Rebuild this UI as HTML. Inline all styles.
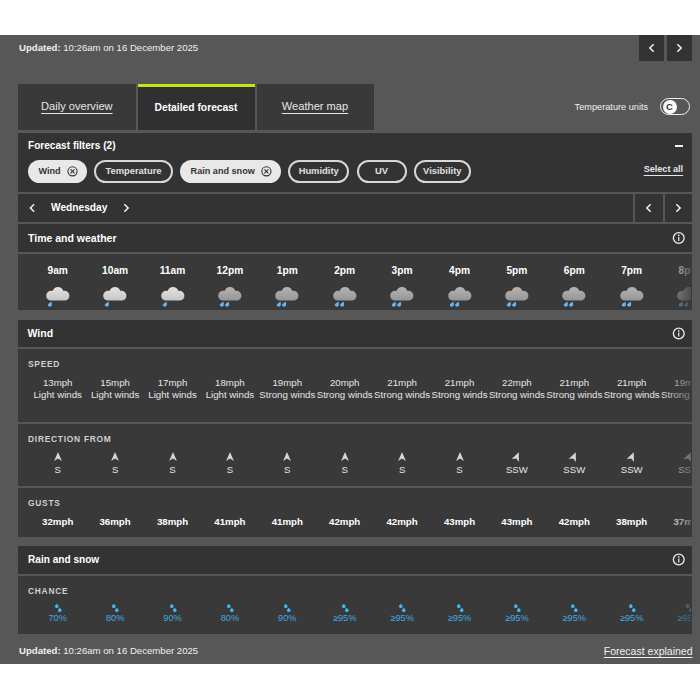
<!DOCTYPE html>
<html><head><meta charset="utf-8"><style>
html,body{margin:0;padding:0;background:#fff;width:700px;height:700px;overflow:hidden;position:relative}
body>div,body>svg,body div,body svg{position:absolute}
.t{white-space:nowrap;line-height:1;font-family:"Liberation Sans", sans-serif}
.u{text-decoration:underline;text-underline-offset:2.5px;text-decoration-thickness:1px}
.u2{text-decoration:underline;text-underline-offset:2.5px;text-decoration-thickness:1px}
.u3{text-decoration:underline;text-underline-offset:2px;text-decoration-thickness:1px}
</style></head><body>
<div style="left:0px;top:35px;width:700px;height:629px;background:#575757;"></div>
<div class="t " style="left:19px;top:43.47px;font-size:9.6px;font-weight:400;color:#f0f0f0;"><b>Updated:</b> 10:26am on 16 December 2025</div>
<div style="left:639px;top:35px;width:25px;height:26px;background:#333;"></div>
<div style="left:667px;top:35px;width:25px;height:26px;background:#333;"></div>
<svg style="left:0;top:0" width="700" height="700"><path d="M653.1 44.8 L649.9 48 L653.1 51.2" stroke="#eee" stroke-width="1.6" fill="none" stroke-linecap="square"/></svg>
<svg style="left:0;top:0" width="700" height="700"><path d="M677.9 44.8 L681.1 48 L677.9 51.2" stroke="#eee" stroke-width="1.6" fill="none" stroke-linecap="square"/></svg>
<div style="left:18px;top:84px;width:117.5px;height:46px;background:#393939;"></div>
<div style="left:137.5px;top:84px;width:117.0px;height:46px;background:#303030;"></div>
<div style="left:137.5px;top:84px;width:117.0px;height:3.299999999999997px;background:#c2e614;"></div>
<div style="left:256.5px;top:84px;width:117.0px;height:46px;background:#393939;"></div>
<div class="t u" style="left:-23.200000000000003px;width:200px;text-align:center;top:101.00px;font-size:11.1px;font-weight:400;color:#e6e6e6;">Daily overview</div>
<div class="t " style="left:96px;width:200px;text-align:center;top:103.48px;font-size:10.3px;font-weight:700;color:#fff;">Detailed forecast</div>
<div class="t u" style="left:215px;width:200px;text-align:center;top:101.00px;font-size:11.1px;font-weight:400;color:#e6e6e6;">Weather map</div>
<div class="t " style="left:574.6px;top:102.51px;font-size:9.2px;font-weight:400;color:#f0f0f0;">Temperature units</div>
<div style="left:660px;top:98px;width:27.6px;height:14.8px;border:1.8px solid #eeeeee;border-radius:10px;"></div>
<div style="left:663px;top:100.1px;width:13.8px;height:13.8px;border-radius:50%;background:#fafafa"></div>
<div class="t " style="left:569.4px;width:200px;text-align:center;top:102.14px;font-size:9.4px;font-weight:700;color:#3a3a3a;">C</div>
<div style="left:18px;top:132.5px;width:674px;height:59.5px;background:#333333;"></div>
<div class="t " style="left:28px;top:141.25px;font-size:10.1px;font-weight:700;color:#fff;">Forecast filters (2)</div>
<div style="left:674.6px;top:145px;width:8.399999999999977px;height:2px;background:#eee;"></div>
<div class="t u2" style="left:383.1px;width:300px;text-align:right;top:164.90px;font-size:9.1px;font-weight:700;color:#e6e6e6;">Select all</div>
<div style="left:27.5px;top:160px;width:59.900000000000006px;height:23px;border-radius:12px;background:#e8e8e8"></div>
<div class="t " style="left:38.5px;top:166.80px;font-size:9.1px;font-weight:700;color:#333;">Wind</div>
<svg style="left:0;top:0" width="700" height="700"><circle cx="72.5" cy="171.3" r="4.6" stroke="#333" stroke-width="1.1" fill="none"/><path d="M70.5 169.3 L74.5 173.3 M74.5 169.3 L70.5 173.3" stroke="#333" stroke-width="1.1"/></svg>
<div style="left:94.3px;top:160px;width:74.39999999999999px;height:19px;border-radius:12px;border:2px solid #d8d8d8"></div>
<div class="t " style="left:33.5px;width:200px;text-align:center;top:166.24px;font-size:9.4px;font-weight:700;color:#e0e0e0;">Temperature</div>
<div style="left:179.6px;top:160px;width:101.70000000000002px;height:23px;border-radius:12px;background:#e8e8e8"></div>
<div class="t " style="left:190.6px;top:166.80px;font-size:9.1px;font-weight:700;color:#333;">Rain and snow</div>
<svg style="left:0;top:0" width="700" height="700"><circle cx="266.40000000000003" cy="171.3" r="4.6" stroke="#333" stroke-width="1.1" fill="none"/><path d="M264.40000000000003 169.3 L268.40000000000003 173.3 M268.40000000000003 169.3 L264.40000000000003 173.3" stroke="#333" stroke-width="1.1"/></svg>
<div style="left:288px;top:160px;width:57.39999999999998px;height:19px;border-radius:12px;border:2px solid #d8d8d8"></div>
<div class="t " style="left:218.7px;width:200px;text-align:center;top:166.24px;font-size:9.4px;font-weight:700;color:#e0e0e0;">Humidity</div>
<div style="left:356.6px;top:160px;width:46.0px;height:19px;border-radius:12px;border:2px solid #d8d8d8"></div>
<div class="t " style="left:281.6px;width:200px;text-align:center;top:166.24px;font-size:9.4px;font-weight:700;color:#e0e0e0;">UV</div>
<div style="left:413.7px;top:160px;width:53.19999999999999px;height:19px;border-radius:12px;border:2px solid #d8d8d8"></div>
<div class="t " style="left:342.29999999999995px;width:200px;text-align:center;top:166.24px;font-size:9.4px;font-weight:700;color:#e0e0e0;">Visibility</div>
<div style="left:18px;top:194.2px;width:615px;height:27.600000000000023px;background:#333333;"></div>
<div style="left:635px;top:194.2px;width:28px;height:27.600000000000023px;background:#333333;"></div>
<div style="left:665px;top:194.2px;width:27px;height:27.600000000000023px;background:#333333;"></div>
<svg style="left:0;top:0" width="700" height="700"><path d="M33.6 204.8 L30.4 208 L33.6 211.2" stroke="#eee" stroke-width="1.6" fill="none" stroke-linecap="square"/></svg>
<svg style="left:0;top:0" width="700" height="700"><path d="M124.9 204.8 L128.1 208 L124.9 211.2" stroke="#eee" stroke-width="1.6" fill="none" stroke-linecap="square"/></svg>
<div class="t " style="left:51px;top:203.37px;font-size:10.2px;font-weight:700;color:#fff;">Wednesday</div>
<svg style="left:0;top:0" width="700" height="700"><path d="M650.1 204.8 L646.9 208 L650.1 211.2" stroke="#eee" stroke-width="1.6" fill="none" stroke-linecap="square"/></svg>
<svg style="left:0;top:0" width="700" height="700"><path d="M676.9 204.8 L680.1 208 L676.9 211.2" stroke="#eee" stroke-width="1.6" fill="none" stroke-linecap="square"/></svg>
<div style="left:18px;top:224px;width:674px;height:27.599999999999994px;background:#333333;"></div>
<div class="t " style="left:28px;top:232.51px;font-size:10.5px;font-weight:700;color:#fff;">Time and weather</div>
<svg style="left:0;top:0" width="700" height="700"><circle cx="678.75" cy="238" r="5.4" stroke="#eee" stroke-width="1.3" fill="none"/><circle cx="678.75" cy="235.4" r="0.8" fill="#eee"/><path d="M678.75 237 L678.75 241" stroke="#eee" stroke-width="1.2"/></svg>
<div style="left:18px;top:254px;width:674px;height:56px;background:#393939;"></div>
<div style="left:18px;top:0;width:673px;height:700px;overflow:hidden">
<div class="t " style="left:-60.3px;width:200px;text-align:center;top:265.57px;font-size:10.2px;font-weight:700;color:#fff;">9am</div>
<svg style="left:27.70px;top:284px" width="24" height="24" viewBox="0 0 24 24"><defs><linearGradient id="g57" x1="0" y1="0" x2="0" y2="1"><stop offset="0" stop-color="#e2e2e2"/><stop offset="1" stop-color="#c6c6c6"/></linearGradient></defs><path d="M5.1 16.6 A4.9 4.9 0 0 1 5.1 6.8 L6.77 6.8 A5.45 5.45 0 0 1 17.23 6.8 L18.5 6.8 A4.9 4.9 0 0 1 18.5 16.6 Z" fill="url(#g57)"/><g transform="translate(1.6,17.7)"><path d="M4.0 0 Q0.7 1.3 0.1 3.0 A2.1 2.1 0 0 0 4.2 3.5 Q4.35 1.7 4.0 0 Z" fill="#6ab4f0"/></g></svg>
<div class="t " style="left:-2.9000000000000057px;width:200px;text-align:center;top:265.57px;font-size:10.2px;font-weight:700;color:#fff;">10am</div>
<svg style="left:85.10px;top:284px" width="24" height="24" viewBox="0 0 24 24"><defs><linearGradient id="g115" x1="0" y1="0" x2="0" y2="1"><stop offset="0" stop-color="#e2e2e2"/><stop offset="1" stop-color="#c6c6c6"/></linearGradient></defs><path d="M5.1 16.6 A4.9 4.9 0 0 1 5.1 6.8 L6.77 6.8 A5.45 5.45 0 0 1 17.23 6.8 L18.5 6.8 A4.9 4.9 0 0 1 18.5 16.6 Z" fill="url(#g115)"/><g transform="translate(1.6,17.7)"><path d="M4.0 0 Q0.7 1.3 0.1 3.0 A2.1 2.1 0 0 0 4.2 3.5 Q4.35 1.7 4.0 0 Z" fill="#6ab4f0"/></g></svg>
<div class="t " style="left:54.5px;width:200px;text-align:center;top:265.57px;font-size:10.2px;font-weight:700;color:#fff;">11am</div>
<svg style="left:142.50px;top:284px" width="24" height="24" viewBox="0 0 24 24"><defs><linearGradient id="g172" x1="0" y1="0" x2="0" y2="1"><stop offset="0" stop-color="#e2e2e2"/><stop offset="1" stop-color="#c6c6c6"/></linearGradient></defs><path d="M5.1 16.6 A4.9 4.9 0 0 1 5.1 6.8 L6.77 6.8 A5.45 5.45 0 0 1 17.23 6.8 L18.5 6.8 A4.9 4.9 0 0 1 18.5 16.6 Z" fill="url(#g172)"/><g transform="translate(1.6,17.7)"><path d="M4.0 0 Q0.7 1.3 0.1 3.0 A2.1 2.1 0 0 0 4.2 3.5 Q4.35 1.7 4.0 0 Z" fill="#6ab4f0"/></g></svg>
<div class="t " style="left:111.89999999999998px;width:200px;text-align:center;top:265.57px;font-size:10.2px;font-weight:700;color:#fff;">12pm</div>
<svg style="left:199.90px;top:284px" width="24" height="24" viewBox="0 0 24 24"><defs><linearGradient id="g229" x1="0" y1="0" x2="0" y2="1"><stop offset="0" stop-color="#b4b4b4"/><stop offset="1" stop-color="#969696"/></linearGradient></defs><path d="M5.1 16.6 A4.9 4.9 0 0 1 5.1 6.8 L6.77 6.8 A5.45 5.45 0 0 1 17.23 6.8 L18.5 6.8 A4.9 4.9 0 0 1 18.5 16.6 Z" fill="url(#g229)"/><g transform="translate(1.6,17.7)"><path d="M4.0 0 Q0.7 1.3 0.1 3.0 A2.1 2.1 0 0 0 4.2 3.5 Q4.35 1.7 4.0 0 Z" fill="#6ab4f0"/></g><g transform="translate(6.9,17.7)"><path d="M4.0 0 Q0.7 1.3 0.1 3.0 A2.1 2.1 0 0 0 4.2 3.5 Q4.35 1.7 4.0 0 Z" fill="#6ab4f0"/></g></svg>
<div class="t " style="left:169.3px;width:200px;text-align:center;top:265.57px;font-size:10.2px;font-weight:700;color:#fff;">1pm</div>
<svg style="left:257.30px;top:284px" width="24" height="24" viewBox="0 0 24 24"><defs><linearGradient id="g287" x1="0" y1="0" x2="0" y2="1"><stop offset="0" stop-color="#b4b4b4"/><stop offset="1" stop-color="#969696"/></linearGradient></defs><path d="M5.1 16.6 A4.9 4.9 0 0 1 5.1 6.8 L6.77 6.8 A5.45 5.45 0 0 1 17.23 6.8 L18.5 6.8 A4.9 4.9 0 0 1 18.5 16.6 Z" fill="url(#g287)"/><g transform="translate(1.6,17.7)"><path d="M4.0 0 Q0.7 1.3 0.1 3.0 A2.1 2.1 0 0 0 4.2 3.5 Q4.35 1.7 4.0 0 Z" fill="#6ab4f0"/></g><g transform="translate(6.9,17.7)"><path d="M4.0 0 Q0.7 1.3 0.1 3.0 A2.1 2.1 0 0 0 4.2 3.5 Q4.35 1.7 4.0 0 Z" fill="#6ab4f0"/></g></svg>
<div class="t " style="left:226.7px;width:200px;text-align:center;top:265.57px;font-size:10.2px;font-weight:700;color:#fff;">2pm</div>
<svg style="left:314.70px;top:284px" width="24" height="24" viewBox="0 0 24 24"><defs><linearGradient id="g344" x1="0" y1="0" x2="0" y2="1"><stop offset="0" stop-color="#b4b4b4"/><stop offset="1" stop-color="#969696"/></linearGradient></defs><path d="M5.1 16.6 A4.9 4.9 0 0 1 5.1 6.8 L6.77 6.8 A5.45 5.45 0 0 1 17.23 6.8 L18.5 6.8 A4.9 4.9 0 0 1 18.5 16.6 Z" fill="url(#g344)"/><g transform="translate(1.6,17.7)"><path d="M4.0 0 Q0.7 1.3 0.1 3.0 A2.1 2.1 0 0 0 4.2 3.5 Q4.35 1.7 4.0 0 Z" fill="#6ab4f0"/></g><g transform="translate(6.9,17.7)"><path d="M4.0 0 Q0.7 1.3 0.1 3.0 A2.1 2.1 0 0 0 4.2 3.5 Q4.35 1.7 4.0 0 Z" fill="#6ab4f0"/></g></svg>
<div class="t " style="left:284.09999999999997px;width:200px;text-align:center;top:265.57px;font-size:10.2px;font-weight:700;color:#fff;">3pm</div>
<svg style="left:372.10px;top:284px" width="24" height="24" viewBox="0 0 24 24"><defs><linearGradient id="g402" x1="0" y1="0" x2="0" y2="1"><stop offset="0" stop-color="#b4b4b4"/><stop offset="1" stop-color="#969696"/></linearGradient></defs><path d="M5.1 16.6 A4.9 4.9 0 0 1 5.1 6.8 L6.77 6.8 A5.45 5.45 0 0 1 17.23 6.8 L18.5 6.8 A4.9 4.9 0 0 1 18.5 16.6 Z" fill="url(#g402)"/><g transform="translate(1.6,17.7)"><path d="M4.0 0 Q0.7 1.3 0.1 3.0 A2.1 2.1 0 0 0 4.2 3.5 Q4.35 1.7 4.0 0 Z" fill="#6ab4f0"/></g><g transform="translate(6.9,17.7)"><path d="M4.0 0 Q0.7 1.3 0.1 3.0 A2.1 2.1 0 0 0 4.2 3.5 Q4.35 1.7 4.0 0 Z" fill="#6ab4f0"/></g></svg>
<div class="t " style="left:341.5px;width:200px;text-align:center;top:265.57px;font-size:10.2px;font-weight:700;color:#fff;">4pm</div>
<svg style="left:429.50px;top:284px" width="24" height="24" viewBox="0 0 24 24"><defs><linearGradient id="g459" x1="0" y1="0" x2="0" y2="1"><stop offset="0" stop-color="#b4b4b4"/><stop offset="1" stop-color="#969696"/></linearGradient></defs><path d="M5.1 16.6 A4.9 4.9 0 0 1 5.1 6.8 L6.77 6.8 A5.45 5.45 0 0 1 17.23 6.8 L18.5 6.8 A4.9 4.9 0 0 1 18.5 16.6 Z" fill="url(#g459)"/><g transform="translate(1.6,17.7)"><path d="M4.0 0 Q0.7 1.3 0.1 3.0 A2.1 2.1 0 0 0 4.2 3.5 Q4.35 1.7 4.0 0 Z" fill="#6ab4f0"/></g><g transform="translate(6.9,17.7)"><path d="M4.0 0 Q0.7 1.3 0.1 3.0 A2.1 2.1 0 0 0 4.2 3.5 Q4.35 1.7 4.0 0 Z" fill="#6ab4f0"/></g></svg>
<div class="t " style="left:398.9px;width:200px;text-align:center;top:265.57px;font-size:10.2px;font-weight:700;color:#fff;">5pm</div>
<svg style="left:486.90px;top:284px" width="24" height="24" viewBox="0 0 24 24"><defs><linearGradient id="g516" x1="0" y1="0" x2="0" y2="1"><stop offset="0" stop-color="#b4b4b4"/><stop offset="1" stop-color="#969696"/></linearGradient></defs><path d="M5.1 16.6 A4.9 4.9 0 0 1 5.1 6.8 L6.77 6.8 A5.45 5.45 0 0 1 17.23 6.8 L18.5 6.8 A4.9 4.9 0 0 1 18.5 16.6 Z" fill="url(#g516)"/><g transform="translate(1.6,17.7)"><path d="M4.0 0 Q0.7 1.3 0.1 3.0 A2.1 2.1 0 0 0 4.2 3.5 Q4.35 1.7 4.0 0 Z" fill="#6ab4f0"/></g><g transform="translate(6.9,17.7)"><path d="M4.0 0 Q0.7 1.3 0.1 3.0 A2.1 2.1 0 0 0 4.2 3.5 Q4.35 1.7 4.0 0 Z" fill="#6ab4f0"/></g></svg>
<div class="t " style="left:456.30000000000007px;width:200px;text-align:center;top:265.57px;font-size:10.2px;font-weight:700;color:#fff;">6pm</div>
<svg style="left:544.30px;top:284px" width="24" height="24" viewBox="0 0 24 24"><defs><linearGradient id="g574" x1="0" y1="0" x2="0" y2="1"><stop offset="0" stop-color="#b4b4b4"/><stop offset="1" stop-color="#969696"/></linearGradient></defs><path d="M5.1 16.6 A4.9 4.9 0 0 1 5.1 6.8 L6.77 6.8 A5.45 5.45 0 0 1 17.23 6.8 L18.5 6.8 A4.9 4.9 0 0 1 18.5 16.6 Z" fill="url(#g574)"/><g transform="translate(1.6,17.7)"><path d="M4.0 0 Q0.7 1.3 0.1 3.0 A2.1 2.1 0 0 0 4.2 3.5 Q4.35 1.7 4.0 0 Z" fill="#6ab4f0"/></g><g transform="translate(6.9,17.7)"><path d="M4.0 0 Q0.7 1.3 0.1 3.0 A2.1 2.1 0 0 0 4.2 3.5 Q4.35 1.7 4.0 0 Z" fill="#6ab4f0"/></g></svg>
<div class="t " style="left:513.7px;width:200px;text-align:center;top:265.57px;font-size:10.2px;font-weight:700;color:#fff;">7pm</div>
<svg style="left:601.70px;top:284px" width="24" height="24" viewBox="0 0 24 24"><defs><linearGradient id="g631" x1="0" y1="0" x2="0" y2="1"><stop offset="0" stop-color="#b4b4b4"/><stop offset="1" stop-color="#969696"/></linearGradient></defs><path d="M5.1 16.6 A4.9 4.9 0 0 1 5.1 6.8 L6.77 6.8 A5.45 5.45 0 0 1 17.23 6.8 L18.5 6.8 A4.9 4.9 0 0 1 18.5 16.6 Z" fill="url(#g631)"/><g transform="translate(1.6,17.7)"><path d="M4.0 0 Q0.7 1.3 0.1 3.0 A2.1 2.1 0 0 0 4.2 3.5 Q4.35 1.7 4.0 0 Z" fill="#6ab4f0"/></g><g transform="translate(6.9,17.7)"><path d="M4.0 0 Q0.7 1.3 0.1 3.0 A2.1 2.1 0 0 0 4.2 3.5 Q4.35 1.7 4.0 0 Z" fill="#6ab4f0"/></g></svg>
<div class="t " style="left:571.1px;width:200px;text-align:center;top:265.57px;font-size:10.2px;font-weight:700;color:#fff;">8pm</div>
<svg style="left:659.10px;top:284px" width="24" height="24" viewBox="0 0 24 24"><defs><linearGradient id="g689" x1="0" y1="0" x2="0" y2="1"><stop offset="0" stop-color="#b4b4b4"/><stop offset="1" stop-color="#969696"/></linearGradient></defs><path d="M5.1 16.6 A4.9 4.9 0 0 1 5.1 6.8 L6.77 6.8 A5.45 5.45 0 0 1 17.23 6.8 L18.5 6.8 A4.9 4.9 0 0 1 18.5 16.6 Z" fill="url(#g689)"/><g transform="translate(1.6,17.7)"><path d="M4.0 0 Q0.7 1.3 0.1 3.0 A2.1 2.1 0 0 0 4.2 3.5 Q4.35 1.7 4.0 0 Z" fill="#6ab4f0"/></g><g transform="translate(6.9,17.7)"><path d="M4.0 0 Q0.7 1.3 0.1 3.0 A2.1 2.1 0 0 0 4.2 3.5 Q4.35 1.7 4.0 0 Z" fill="#6ab4f0"/></g></svg>
</div>
<div style="left:18px;top:320px;width:674px;height:27px;background:#333333;"></div>
<div class="t " style="left:27.5px;top:328.41px;font-size:10.5px;font-weight:700;color:#fff;">Wind</div>
<svg style="left:0;top:0" width="700" height="700"><circle cx="678.75" cy="333.5" r="5.4" stroke="#eee" stroke-width="1.3" fill="none"/><circle cx="678.75" cy="330.9" r="0.8" fill="#eee"/><path d="M678.75 332.5 L678.75 336.5" stroke="#eee" stroke-width="1.2"/></svg>
<div style="left:18px;top:349px;width:674px;height:73px;background:#393939;"></div>
<div class="t " style="left:28px;top:359.99px;font-size:8.4px;font-weight:700;color:#d0d0d0;letter-spacing:0.75px">SPEED</div>
<div style="left:18px;top:424.3px;width:674px;height:61.69999999999999px;background:#393939;"></div>
<div class="t " style="left:28px;top:434.99px;font-size:8.4px;font-weight:700;color:#d0d0d0;letter-spacing:0.75px">DIRECTION FROM</div>
<div style="left:18px;top:488px;width:674px;height:49px;background:#393939;"></div>
<div class="t " style="left:28px;top:498.99px;font-size:8.4px;font-weight:700;color:#d0d0d0;letter-spacing:0.75px">GUSTS</div>
<div style="left:18px;top:0;width:673px;height:700px;overflow:hidden">
<div class="t " style="left:-60.3px;width:200px;text-align:center;top:377.79px;font-size:9.7px;font-weight:400;color:#e6e6e6;">13mph</div>
<div class="t " style="left:-60.3px;width:200px;text-align:center;top:390.09px;font-size:9.7px;font-weight:400;color:#e6e6e6;">Light winds</div>
<svg style="left:33.70px;top:450px" width="12" height="13" viewBox="-6 -6.5 12 13"><path transform="rotate(0)" d="M0 -4.6 L3.9 4.4 L0 2.1 L-3.9 4.4 Z" fill="#d6d6d6"/></svg>
<div class="t " style="left:-60.3px;width:200px;text-align:center;top:465.47px;font-size:9.6px;font-weight:400;color:#e6e6e6;">S</div>
<div class="t " style="left:-60.3px;width:200px;text-align:center;top:516.69px;font-size:9.7px;font-weight:700;color:#fff;">32mph</div>
<div class="t " style="left:-2.9000000000000057px;width:200px;text-align:center;top:377.79px;font-size:9.7px;font-weight:400;color:#e6e6e6;">15mph</div>
<div class="t " style="left:-2.9000000000000057px;width:200px;text-align:center;top:390.09px;font-size:9.7px;font-weight:400;color:#e6e6e6;">Light winds</div>
<svg style="left:91.10px;top:450px" width="12" height="13" viewBox="-6 -6.5 12 13"><path transform="rotate(0)" d="M0 -4.6 L3.9 4.4 L0 2.1 L-3.9 4.4 Z" fill="#d6d6d6"/></svg>
<div class="t " style="left:-2.9000000000000057px;width:200px;text-align:center;top:465.47px;font-size:9.6px;font-weight:400;color:#e6e6e6;">S</div>
<div class="t " style="left:-2.9000000000000057px;width:200px;text-align:center;top:516.69px;font-size:9.7px;font-weight:700;color:#fff;">36mph</div>
<div class="t " style="left:54.5px;width:200px;text-align:center;top:377.79px;font-size:9.7px;font-weight:400;color:#e6e6e6;">17mph</div>
<div class="t " style="left:54.5px;width:200px;text-align:center;top:390.09px;font-size:9.7px;font-weight:400;color:#e6e6e6;">Light winds</div>
<svg style="left:148.50px;top:450px" width="12" height="13" viewBox="-6 -6.5 12 13"><path transform="rotate(0)" d="M0 -4.6 L3.9 4.4 L0 2.1 L-3.9 4.4 Z" fill="#d6d6d6"/></svg>
<div class="t " style="left:54.5px;width:200px;text-align:center;top:465.47px;font-size:9.6px;font-weight:400;color:#e6e6e6;">S</div>
<div class="t " style="left:54.5px;width:200px;text-align:center;top:516.69px;font-size:9.7px;font-weight:700;color:#fff;">38mph</div>
<div class="t " style="left:111.89999999999998px;width:200px;text-align:center;top:377.79px;font-size:9.7px;font-weight:400;color:#e6e6e6;">18mph</div>
<div class="t " style="left:111.89999999999998px;width:200px;text-align:center;top:390.09px;font-size:9.7px;font-weight:400;color:#e6e6e6;">Light winds</div>
<svg style="left:205.90px;top:450px" width="12" height="13" viewBox="-6 -6.5 12 13"><path transform="rotate(0)" d="M0 -4.6 L3.9 4.4 L0 2.1 L-3.9 4.4 Z" fill="#d6d6d6"/></svg>
<div class="t " style="left:111.89999999999998px;width:200px;text-align:center;top:465.47px;font-size:9.6px;font-weight:400;color:#e6e6e6;">S</div>
<div class="t " style="left:111.89999999999998px;width:200px;text-align:center;top:516.69px;font-size:9.7px;font-weight:700;color:#fff;">41mph</div>
<div class="t " style="left:169.3px;width:200px;text-align:center;top:377.79px;font-size:9.7px;font-weight:400;color:#e6e6e6;">19mph</div>
<div class="t " style="left:169.3px;width:200px;text-align:center;top:390.09px;font-size:9.7px;font-weight:400;color:#e6e6e6;">Strong winds</div>
<svg style="left:263.30px;top:450px" width="12" height="13" viewBox="-6 -6.5 12 13"><path transform="rotate(0)" d="M0 -4.6 L3.9 4.4 L0 2.1 L-3.9 4.4 Z" fill="#d6d6d6"/></svg>
<div class="t " style="left:169.3px;width:200px;text-align:center;top:465.47px;font-size:9.6px;font-weight:400;color:#e6e6e6;">S</div>
<div class="t " style="left:169.3px;width:200px;text-align:center;top:516.69px;font-size:9.7px;font-weight:700;color:#fff;">41mph</div>
<div class="t " style="left:226.7px;width:200px;text-align:center;top:377.79px;font-size:9.7px;font-weight:400;color:#e6e6e6;">20mph</div>
<div class="t " style="left:226.7px;width:200px;text-align:center;top:390.09px;font-size:9.7px;font-weight:400;color:#e6e6e6;">Strong winds</div>
<svg style="left:320.70px;top:450px" width="12" height="13" viewBox="-6 -6.5 12 13"><path transform="rotate(0)" d="M0 -4.6 L3.9 4.4 L0 2.1 L-3.9 4.4 Z" fill="#d6d6d6"/></svg>
<div class="t " style="left:226.7px;width:200px;text-align:center;top:465.47px;font-size:9.6px;font-weight:400;color:#e6e6e6;">S</div>
<div class="t " style="left:226.7px;width:200px;text-align:center;top:516.69px;font-size:9.7px;font-weight:700;color:#fff;">42mph</div>
<div class="t " style="left:284.09999999999997px;width:200px;text-align:center;top:377.79px;font-size:9.7px;font-weight:400;color:#e6e6e6;">21mph</div>
<div class="t " style="left:284.09999999999997px;width:200px;text-align:center;top:390.09px;font-size:9.7px;font-weight:400;color:#e6e6e6;">Strong winds</div>
<svg style="left:378.10px;top:450px" width="12" height="13" viewBox="-6 -6.5 12 13"><path transform="rotate(0)" d="M0 -4.6 L3.9 4.4 L0 2.1 L-3.9 4.4 Z" fill="#d6d6d6"/></svg>
<div class="t " style="left:284.09999999999997px;width:200px;text-align:center;top:465.47px;font-size:9.6px;font-weight:400;color:#e6e6e6;">S</div>
<div class="t " style="left:284.09999999999997px;width:200px;text-align:center;top:516.69px;font-size:9.7px;font-weight:700;color:#fff;">42mph</div>
<div class="t " style="left:341.5px;width:200px;text-align:center;top:377.79px;font-size:9.7px;font-weight:400;color:#e6e6e6;">21mph</div>
<div class="t " style="left:341.5px;width:200px;text-align:center;top:390.09px;font-size:9.7px;font-weight:400;color:#e6e6e6;">Strong winds</div>
<svg style="left:435.50px;top:450px" width="12" height="13" viewBox="-6 -6.5 12 13"><path transform="rotate(0)" d="M0 -4.6 L3.9 4.4 L0 2.1 L-3.9 4.4 Z" fill="#d6d6d6"/></svg>
<div class="t " style="left:341.5px;width:200px;text-align:center;top:465.47px;font-size:9.6px;font-weight:400;color:#e6e6e6;">S</div>
<div class="t " style="left:341.5px;width:200px;text-align:center;top:516.69px;font-size:9.7px;font-weight:700;color:#fff;">43mph</div>
<div class="t " style="left:398.9px;width:200px;text-align:center;top:377.79px;font-size:9.7px;font-weight:400;color:#e6e6e6;">22mph</div>
<div class="t " style="left:398.9px;width:200px;text-align:center;top:390.09px;font-size:9.7px;font-weight:400;color:#e6e6e6;">Strong winds</div>
<svg style="left:492.90px;top:450px" width="12" height="13" viewBox="-6 -6.5 12 13"><path transform="rotate(22.5)" d="M0 -4.6 L3.9 4.4 L0 2.1 L-3.9 4.4 Z" fill="#d6d6d6"/></svg>
<div class="t " style="left:398.9px;width:200px;text-align:center;top:465.47px;font-size:9.6px;font-weight:400;color:#e6e6e6;">SSW</div>
<div class="t " style="left:398.9px;width:200px;text-align:center;top:516.69px;font-size:9.7px;font-weight:700;color:#fff;">43mph</div>
<div class="t " style="left:456.30000000000007px;width:200px;text-align:center;top:377.79px;font-size:9.7px;font-weight:400;color:#e6e6e6;">21mph</div>
<div class="t " style="left:456.30000000000007px;width:200px;text-align:center;top:390.09px;font-size:9.7px;font-weight:400;color:#e6e6e6;">Strong winds</div>
<svg style="left:550.30px;top:450px" width="12" height="13" viewBox="-6 -6.5 12 13"><path transform="rotate(22.5)" d="M0 -4.6 L3.9 4.4 L0 2.1 L-3.9 4.4 Z" fill="#d6d6d6"/></svg>
<div class="t " style="left:456.30000000000007px;width:200px;text-align:center;top:465.47px;font-size:9.6px;font-weight:400;color:#e6e6e6;">SSW</div>
<div class="t " style="left:456.30000000000007px;width:200px;text-align:center;top:516.69px;font-size:9.7px;font-weight:700;color:#fff;">42mph</div>
<div class="t " style="left:513.7px;width:200px;text-align:center;top:377.79px;font-size:9.7px;font-weight:400;color:#e6e6e6;">21mph</div>
<div class="t " style="left:513.7px;width:200px;text-align:center;top:390.09px;font-size:9.7px;font-weight:400;color:#e6e6e6;">Strong winds</div>
<svg style="left:607.70px;top:450px" width="12" height="13" viewBox="-6 -6.5 12 13"><path transform="rotate(22.5)" d="M0 -4.6 L3.9 4.4 L0 2.1 L-3.9 4.4 Z" fill="#d6d6d6"/></svg>
<div class="t " style="left:513.7px;width:200px;text-align:center;top:465.47px;font-size:9.6px;font-weight:400;color:#e6e6e6;">SSW</div>
<div class="t " style="left:513.7px;width:200px;text-align:center;top:516.69px;font-size:9.7px;font-weight:700;color:#fff;">38mph</div>
<div class="t " style="left:571.1px;width:200px;text-align:center;top:377.79px;font-size:9.7px;font-weight:400;color:#e6e6e6;">19mph</div>
<div class="t " style="left:571.1px;width:200px;text-align:center;top:390.09px;font-size:9.7px;font-weight:400;color:#e6e6e6;">Strong winds</div>
<svg style="left:665.10px;top:450px" width="12" height="13" viewBox="-6 -6.5 12 13"><path transform="rotate(22.5)" d="M0 -4.6 L3.9 4.4 L0 2.1 L-3.9 4.4 Z" fill="#d6d6d6"/></svg>
<div class="t " style="left:571.1px;width:200px;text-align:center;top:465.47px;font-size:9.6px;font-weight:400;color:#e6e6e6;">SSW</div>
<div class="t " style="left:571.1px;width:200px;text-align:center;top:516.69px;font-size:9.7px;font-weight:700;color:#fff;">37mph</div>
</div>
<div style="left:18px;top:546px;width:674px;height:27.5px;background:#333333;"></div>
<div class="t " style="left:28px;top:555.25px;font-size:10.1px;font-weight:700;color:#fff;">Rain and snow</div>
<svg style="left:0;top:0" width="700" height="700"><circle cx="678.75" cy="559.5" r="5.4" stroke="#eee" stroke-width="1.3" fill="none"/><circle cx="678.75" cy="556.9" r="0.8" fill="#eee"/><path d="M678.75 558.5 L678.75 562.5" stroke="#eee" stroke-width="1.2"/></svg>
<div style="left:18px;top:575.5px;width:674px;height:58.0px;background:#393939;"></div>
<div class="t " style="left:28px;top:586.89px;font-size:8.4px;font-weight:700;color:#d0d0d0;letter-spacing:0.75px">CHANCE</div>
<div style="left:18px;top:0;width:673px;height:700px;overflow:hidden">
<svg style="left:35.70px;top:603px" width="8" height="9" viewBox="0 0 8 9"><path d="M2.8 0.7 L4.4 2.5 A1.8 1.8 0 1 1 1.2 2.5 Z" fill="#40b6f0"/><path d="M5.8 4.7 L7.4 6.5 A1.8 1.8 0 1 1 4.2 6.5 Z" fill="#40b6f0"/></svg>
<div class="t " style="left:-60.3px;width:200px;text-align:center;top:613.91px;font-size:9.2px;font-weight:400;color:#3fa9e4;">70%</div>
<svg style="left:93.10px;top:603px" width="8" height="9" viewBox="0 0 8 9"><path d="M2.8 0.7 L4.4 2.5 A1.8 1.8 0 1 1 1.2 2.5 Z" fill="#40b6f0"/><path d="M5.8 4.7 L7.4 6.5 A1.8 1.8 0 1 1 4.2 6.5 Z" fill="#40b6f0"/></svg>
<div class="t " style="left:-2.9000000000000057px;width:200px;text-align:center;top:613.91px;font-size:9.2px;font-weight:400;color:#3fa9e4;">80%</div>
<svg style="left:150.50px;top:603px" width="8" height="9" viewBox="0 0 8 9"><path d="M2.8 0.7 L4.4 2.5 A1.8 1.8 0 1 1 1.2 2.5 Z" fill="#40b6f0"/><path d="M5.8 4.7 L7.4 6.5 A1.8 1.8 0 1 1 4.2 6.5 Z" fill="#40b6f0"/></svg>
<div class="t " style="left:54.5px;width:200px;text-align:center;top:613.91px;font-size:9.2px;font-weight:400;color:#3fa9e4;">90%</div>
<svg style="left:207.90px;top:603px" width="8" height="9" viewBox="0 0 8 9"><path d="M2.8 0.7 L4.4 2.5 A1.8 1.8 0 1 1 1.2 2.5 Z" fill="#40b6f0"/><path d="M5.8 4.7 L7.4 6.5 A1.8 1.8 0 1 1 4.2 6.5 Z" fill="#40b6f0"/></svg>
<div class="t " style="left:111.89999999999998px;width:200px;text-align:center;top:613.91px;font-size:9.2px;font-weight:400;color:#3fa9e4;">80%</div>
<svg style="left:265.30px;top:603px" width="8" height="9" viewBox="0 0 8 9"><path d="M2.8 0.7 L4.4 2.5 A1.8 1.8 0 1 1 1.2 2.5 Z" fill="#40b6f0"/><path d="M5.8 4.7 L7.4 6.5 A1.8 1.8 0 1 1 4.2 6.5 Z" fill="#40b6f0"/></svg>
<div class="t " style="left:169.3px;width:200px;text-align:center;top:613.91px;font-size:9.2px;font-weight:400;color:#3fa9e4;">90%</div>
<svg style="left:322.70px;top:603px" width="8" height="9" viewBox="0 0 8 9"><path d="M2.8 0.7 L4.4 2.5 A1.8 1.8 0 1 1 1.2 2.5 Z" fill="#40b6f0"/><path d="M5.8 4.7 L7.4 6.5 A1.8 1.8 0 1 1 4.2 6.5 Z" fill="#40b6f0"/></svg>
<div class="t " style="left:226.7px;width:200px;text-align:center;top:613.91px;font-size:9.2px;font-weight:400;color:#3fa9e4;">&ge;95%</div>
<svg style="left:380.10px;top:603px" width="8" height="9" viewBox="0 0 8 9"><path d="M2.8 0.7 L4.4 2.5 A1.8 1.8 0 1 1 1.2 2.5 Z" fill="#40b6f0"/><path d="M5.8 4.7 L7.4 6.5 A1.8 1.8 0 1 1 4.2 6.5 Z" fill="#40b6f0"/></svg>
<div class="t " style="left:284.09999999999997px;width:200px;text-align:center;top:613.91px;font-size:9.2px;font-weight:400;color:#3fa9e4;">&ge;95%</div>
<svg style="left:437.50px;top:603px" width="8" height="9" viewBox="0 0 8 9"><path d="M2.8 0.7 L4.4 2.5 A1.8 1.8 0 1 1 1.2 2.5 Z" fill="#40b6f0"/><path d="M5.8 4.7 L7.4 6.5 A1.8 1.8 0 1 1 4.2 6.5 Z" fill="#40b6f0"/></svg>
<div class="t " style="left:341.5px;width:200px;text-align:center;top:613.91px;font-size:9.2px;font-weight:400;color:#3fa9e4;">&ge;95%</div>
<svg style="left:494.90px;top:603px" width="8" height="9" viewBox="0 0 8 9"><path d="M2.8 0.7 L4.4 2.5 A1.8 1.8 0 1 1 1.2 2.5 Z" fill="#40b6f0"/><path d="M5.8 4.7 L7.4 6.5 A1.8 1.8 0 1 1 4.2 6.5 Z" fill="#40b6f0"/></svg>
<div class="t " style="left:398.9px;width:200px;text-align:center;top:613.91px;font-size:9.2px;font-weight:400;color:#3fa9e4;">&ge;95%</div>
<svg style="left:552.30px;top:603px" width="8" height="9" viewBox="0 0 8 9"><path d="M2.8 0.7 L4.4 2.5 A1.8 1.8 0 1 1 1.2 2.5 Z" fill="#40b6f0"/><path d="M5.8 4.7 L7.4 6.5 A1.8 1.8 0 1 1 4.2 6.5 Z" fill="#40b6f0"/></svg>
<div class="t " style="left:456.30000000000007px;width:200px;text-align:center;top:613.91px;font-size:9.2px;font-weight:400;color:#3fa9e4;">&ge;95%</div>
<svg style="left:609.70px;top:603px" width="8" height="9" viewBox="0 0 8 9"><path d="M2.8 0.7 L4.4 2.5 A1.8 1.8 0 1 1 1.2 2.5 Z" fill="#40b6f0"/><path d="M5.8 4.7 L7.4 6.5 A1.8 1.8 0 1 1 4.2 6.5 Z" fill="#40b6f0"/></svg>
<div class="t " style="left:513.7px;width:200px;text-align:center;top:613.91px;font-size:9.2px;font-weight:400;color:#3fa9e4;">&ge;95%</div>
<svg style="left:667.10px;top:603px" width="8" height="9" viewBox="0 0 8 9"><path d="M2.8 0.7 L4.4 2.5 A1.8 1.8 0 1 1 1.2 2.5 Z" fill="#40b6f0"/><path d="M5.8 4.7 L7.4 6.5 A1.8 1.8 0 1 1 4.2 6.5 Z" fill="#40b6f0"/></svg>
<div class="t " style="left:571.1px;width:200px;text-align:center;top:613.91px;font-size:9.2px;font-weight:400;color:#3fa9e4;">&ge;95%</div>
</div>
<div style="left:664px;top:254px;width:28px;height:56px;background:linear-gradient(90deg,rgba(57,57,57,0.1),rgba(57,57,57,0.85))"></div>
<div style="left:660px;top:349px;width:32px;height:73px;background:linear-gradient(90deg,rgba(57,57,57,0),rgba(57,57,57,0.7))"></div>
<div style="left:660px;top:424.3px;width:32px;height:61.69999999999999px;background:linear-gradient(90deg,rgba(57,57,57,0),rgba(57,57,57,0.7))"></div>
<div style="left:660px;top:488px;width:32px;height:49px;background:linear-gradient(90deg,rgba(57,57,57,0),rgba(57,57,57,0.7))"></div>
<div style="left:660px;top:575.5px;width:32px;height:58.0px;background:linear-gradient(90deg,rgba(57,57,57,0),rgba(57,57,57,0.7))"></div>
<div class="t " style="left:19px;top:646.17px;font-size:9.6px;font-weight:400;color:#f0f0f0;"><b>Updated:</b> 10:26am on 16 December 2025</div>
<div class="t u3" style="left:392.5px;width:300px;text-align:right;top:646.11px;font-size:10.5px;font-weight:400;color:#f0f0f0;">Forecast explained</div>
</body></html>
